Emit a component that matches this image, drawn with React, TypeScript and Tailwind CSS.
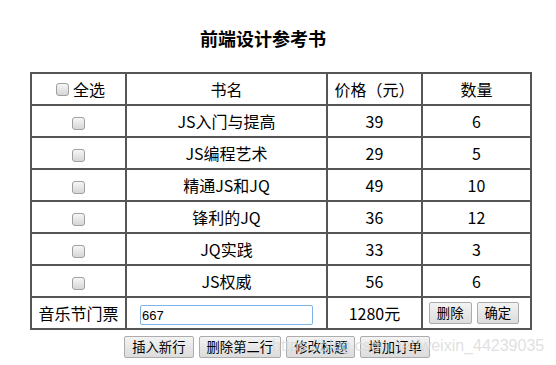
const books = [
  { name: "JS入门与提高", price: "39", qty: "6" },
  { name: "JS编程艺术", price: "29", qty: "5" },
  { name: "精通JS和JQ", price: "49", qty: "10" },
  { name: "锋利的JQ", price: "36", qty: "12" },
  { name: "JQ实践", price: "33", qty: "3" },
  { name: "JS权威", price: "56", qty: "6" },
];

function Box() {
  return (
    <span className="inline-block w-[13px] h-[13px] rounded-[3px] border border-[#9f9f9f] bg-gradient-to-b from-[#f6f6f6] to-[#d6d6d6] align-middle" />
  );
}

function Btn({ label }: { label: string }) {
  return (
    <button className="h-[22px] px-[7px] border border-[#acacac] rounded-[2px] bg-gradient-to-b from-[#f3f3f3] to-[#dcdcdc] text-[13.33px] leading-none text-black">
      {label}
    </button>
  );
}

const cell = "border-2 border-[#555] text-center h-[32px] p-0";

export default function App() {
  return (
    <div className="relative w-[556px] h-[365px] bg-white text-black font-['Microsoft_YaHei','Noto_Sans_CJK_SC',sans-serif]">
      <div className="ml-[30px] w-[500px] pt-[25px]">
        <h3 className="pr-[34px] text-center text-[18px] font-bold leading-[26px]">
          前端设计参考书
        </h3>
        <table className="mt-[21px] w-[500px] table-fixed border-collapse text-[16px]">
          <colgroup>
            <col className="w-[95px]" />
            <col className="w-[201px]" />
            <col className="w-[95px]" />
            <col className="w-[109px]" />
          </colgroup>
          <tbody>
            <tr>
              <td className={cell}>
                <span className="inline-flex items-center gap-[4px] pl-[4px]">
                  <Box />
                  全选
                </span>
              </td>
              <td className={cell}>书名</td>
              <td className={cell}>价格（元）</td>
              <td className={cell}>数量</td>
            </tr>
            {books.map((b) => (
              <tr key={b.name}>
                <td className={cell}>
                  <Box />
                </td>
                <td className={cell}>{b.name}</td>
                <td className={cell}>{b.price}</td>
                <td className={cell}>{b.qty}</td>
              </tr>
            ))}
            <tr>
              <td className={cell}>音乐节门票</td>
              <td className={`${cell} text-left`}>
                <input
                  defaultValue="667"
                  className="ml-[13px] w-[173px] h-[20px] border border-[#7eb4ea] rounded-[2px] px-[1px] text-[13px] font-['Liberation_Sans',sans-serif] outline-none align-middle"
                />
              </td>
              <td className={cell}>1280元</td>
              <td className={cell}>
                <div className="flex justify-center gap-[5px] pr-[5px]">
                  <Btn label="删除" />
                  <Btn label="确定" />
                </div>
              </td>
            </tr>
          </tbody>
        </table>
        <div className="mt-[6px] flex justify-center gap-[5px] pr-[6px]">
          <Btn label="插入新行" />
          <Btn label="删除第二行" />
          <Btn label="修改标题" />
          <Btn label="增加订单" />
        </div>
      </div>
      <div className="absolute left-[272px] top-[336px] text-[16px] leading-[20px] text-[#d8d8d8]/80 font-['Liberation_Sans',sans-serif] pointer-events-none">
        https://blog.csdn.net/weixin_44239035
      </div>
    </div>
  );
}
